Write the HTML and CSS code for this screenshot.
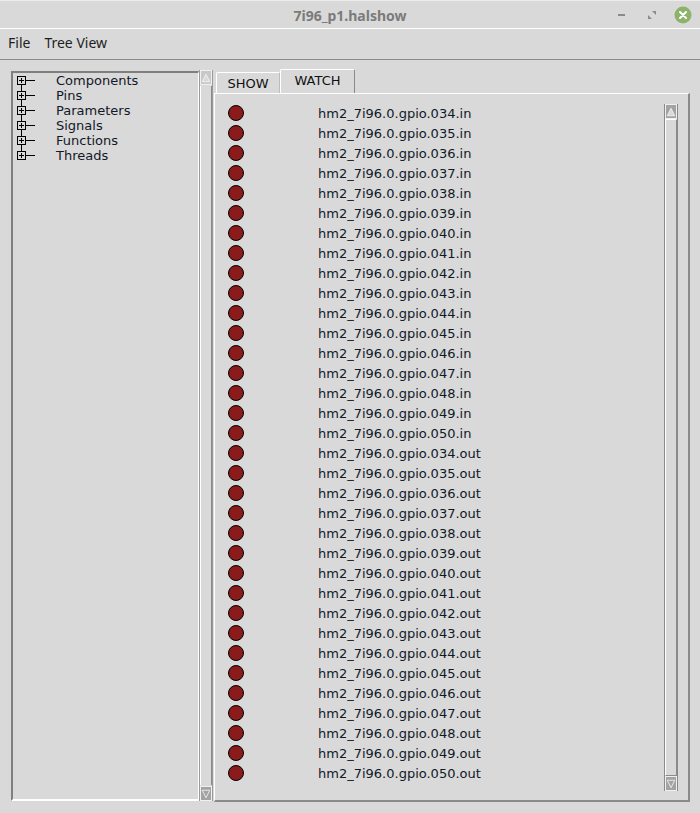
FILE: index.html
```html
<!DOCTYPE html>
<html>
<head>
<meta charset="utf-8">
<link rel="stylesheet" href="styles.css">
</head>
<body>
<div class="window">
  <div class="titlebar">
    <span class="title">7i96_p1.halshow</span>
    <div class="controls">
      <span class="ctl-min"></span>
      <svg class="ctl-max" width="10" height="10" viewBox="0 0 10 10"><path d="M5 1h4v4z M1 5v4h4z" fill="#8a8a8a"/></svg>
      <svg class="ctl-close" width="18" height="18" viewBox="0 0 18 18"><circle cx="9" cy="9" r="8.5" fill="#8db36b"/><path d="M6 6l6 6M12 6l-6 6" stroke="#fff" stroke-width="2" stroke-linecap="round"/></svg>
    </div>
  </div>
  <div class="menubar">
    <span class="menu-item">File</span>
    <span class="menu-item">Tree View</span>
  </div>
  <div class="main">
    <div class="tree-pane">
      <ul class="tree">
        <li><span class="node"><span class="plus"></span></span>Components</li>
        <li><span class="node"><span class="plus"></span></span>Pins</li>
        <li><span class="node"><span class="plus"></span></span>Parameters</li>
        <li><span class="node"><span class="plus"></span></span>Signals</li>
        <li><span class="node"><span class="plus"></span></span>Functions</li>
        <li class="last"><span class="node"><span class="plus"></span></span>Threads</li>
      </ul>
    </div>
    <div class="vscroll left-scroll">
      <div class="arrow up light"><svg width="12" height="12" viewBox="0 0 12 12"><path d="M6 1.5L10.5 10.5H1.5Z" fill="#d9d9d9" stroke="#f4f4f4" stroke-width="1"/></svg></div>
      <div class="trough"></div>
      <div class="arrow down"><svg width="12" height="12" viewBox="0 0 12 12"><path d="M6 10.5L10.5 1.5H1.5Z" fill="#a3a3a3" stroke="#f4f4f4" stroke-width="1"/></svg></div>
    </div>
    <div class="notebook">
      <div class="tabs">
        <span class="tab">SHOW</span>
        <span class="tab active">WATCH</span>
      </div>
      <div class="panel">
        <div class="watch-list" id="list"></div>
        <div class="vscroll right-scroll">
          <div class="arrow up"><svg width="12" height="12" viewBox="0 0 12 12"><path d="M6 1.5L10.5 10.5H1.5Z" fill="#d9d9d9" stroke="#f4f4f4" stroke-width="1"/></svg></div>
          <div class="slider"></div>
          <div class="arrow down"><svg width="12" height="12" viewBox="0 0 12 12"><path d="M6 10.5L10.5 1.5H1.5Z" fill="#a3a3a3" stroke="#f4f4f4" stroke-width="1"/></svg></div>
        </div>
      </div>
    </div>
  </div>
</div>
<script>
  var list = document.getElementById('list');
  var names = [];
  for (var s of ['in', 'out']) {
    for (var i = 34; i <= 50; i++) names.push('hm2_7i96.0.gpio.0' + i + '.' + s);
  }
  names.forEach(function (n) {
    var row = document.createElement('div');
    row.className = 'row';
    row.innerHTML = '<span class="led"></span><span class="pin"></span>';
    row.lastChild.textContent = n;
    list.appendChild(row);
  });
</script>
</body>
</html>
```

FILE: styles.css
```css
html, body {
  margin: 0;
  padding: 0;
  background: #d9d9d9;
}
.window {
  width: 700px;
  height: 813px;
  background: #d9d9d9;
  overflow: hidden;
  position: relative;
}
.titlebar {
  border-top: 1px solid #ececec;
  border-bottom: 1px solid #ffffff;
  box-sizing: border-box;
  height: 29px;
  display: flex;
  align-items: center;
  justify-content: center;
  position: relative;
}
.title {
  font-family: "Noto Sans", sans-serif;
  font-weight: bold;
  font-size: 14px;
  color: #7b7b7b;
  margin-top: 1px;
}
.controls {
  position: absolute;
  right: 8px;
  top: 5px;
  display: flex;
  align-items: center;
}
.ctl-min {
  width: 7px;
  height: 2px;
  background: #8a8a8a;
  margin-right: 22px;
}
.ctl-max {
  margin-right: 17px;
}
.menubar {
  border-bottom: 1px solid #8a8a8a;
  display: flex;
  align-items: center;
  padding-left: 8px;
  padding-bottom: 3px;
  box-sizing: border-box;
  height: 31px;
}
.menu-item {
  font-family: "Noto Sans", sans-serif;
  font-size: 14px;
  color: #1e1e1e;
  margin-right: 14px;
}
.main {
  display: flex;
  align-items: flex-start;
  padding: 9px 0 0 11px;
}
.tree-pane {
  width: 188px;
  height: 730px;
  margin-top: 2px;
  box-sizing: border-box;
  border-style: solid;
  border-width: 2px 1px 2px 2px;
  border-color: #7f7f7f #ffffff #ffffff #7f7f7f;
}
.tree {
  list-style: none;
  margin: 0;
  padding: 0;
}
.tree li {
  font-family: "DejaVu Sans", sans-serif;
  font-size: 13px;
  line-height: 15px;
  height: 15px;
  color: #111827;
  display: flex;
  align-items: center;
  position: relative;
}
.node {
  width: 43px;
  height: 15px;
  position: relative;
}
.node::before {
  content: "";
  position: absolute;
  left: 8px;
  top: 0;
  bottom: 0;
  border-left: 1px solid #000;
}
.tree li:first-child .node::before { top: 7px; }
.tree li.last .node::before { bottom: 8px; }
.node::after {
  content: "";
  position: absolute;
  left: 8px;
  width: 14px;
  top: 7px;
  border-top: 1px solid #000;
}
.plus {
  position: absolute;
  left: 4px;
  top: 3px;
  width: 7px;
  height: 7px;
  border: 1px solid #000;
  background: #d9d9d9;
  z-index: 1;
}
.plus::before {
  content: "";
  position: absolute;
  left: 1px;
  right: 1px;
  top: 3px;
  border-top: 1px solid #000;
}
.plus::after {
  content: "";
  position: absolute;
  top: 1px;
  bottom: 1px;
  left: 3px;
  border-left: 1px solid #000;
}
.vscroll {
  width: 14px;
  display: flex;
  flex-direction: column;
  box-sizing: border-box;
}
.left-scroll {
  height: 731px;
  margin-top: 1px;
  border-left: 1px solid #9a9a9a;
  border-right: 1px solid #9a9a9a;
}
.arrow {
  height: 15px;
  flex: none;
  background: #a3a3a3;
  display: flex;
  align-items: center;
  justify-content: center;
  box-sizing: border-box;
  border: 1px solid #f0f0f0;
}
.arrow.light {
  background: #c8c8c8;
}
.trough {
  flex: 1;
  border-left: 1px solid #ffffff;
  border-right: 1px solid #8a8a8a;
  margin: 1px 0;
}
.notebook {
  width: 476px;
  margin-left: 1px;
  display: flex;
  flex-direction: column;
}
.tabs {
  height: 24px;
  display: flex;
  align-items: flex-end;
  padding-left: 2px;
}
.tab {
  font-family: "DejaVu Sans", sans-serif;
  font-size: 13px;
  color: #111;
  height: 21px;
  box-sizing: border-box;
  padding: 3px 10px 0 10px;
  border-top: 1px solid #ffffff;
  border-left: 1px solid #ffffff;
  border-right: 1px solid #bcbcbc;
  border-radius: 2px 2px 0 0;
  width: 64px;
  text-align: center;
}
.tab.active {
  height: 24px;
  width: 75px;
  padding-top: 3px;
  border-right: 1px solid #8a8a8a;
}
.panel {
  height: 709px;
  box-sizing: border-box;
  border-style: solid;
  border-width: 1px 2px 2px 1px;
  border-color: #ffffff #8a8a8a #8a8a8a #ffffff;
  display: flex;
  align-items: flex-start;
  justify-content: space-between;
  padding: 9px 10px 0 13px;
}
.watch-list {
  display: flex;
  flex-direction: column;
}
.row {
  height: 20px;
  display: flex;
  align-items: center;
}
.led {
  width: 16px;
  height: 16px;
  box-sizing: border-box;
  border-radius: 50%;
  background: #8b1a1a;
  border: 1px solid #000;
  margin-right: 74px;
}
.pin {
  font-family: "DejaVu Sans", sans-serif;
  font-size: 13px;
  color: #111827;
}
.right-scroll {
  height: 687px;
  margin-top: 1px;
  border-left: 1px solid #8a8a8a;
  border-right: 1px solid #8a8a8a;
}
.slider {
  flex: 1;
  border-style: solid;
  border-width: 1px;
  border-color: #ffffff #8a8a8a #8a8a8a #ffffff;
}
```
